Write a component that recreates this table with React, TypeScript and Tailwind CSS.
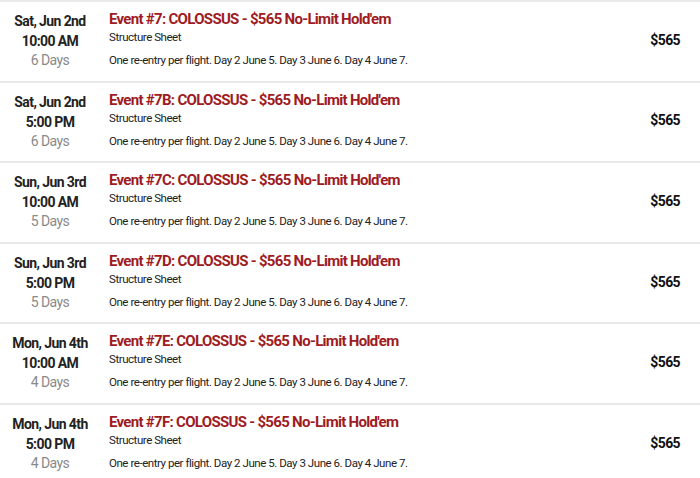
import React from "react";

interface EventRowProps {
  day: string;
  time: string;
  left: string;
  title: string;
}

const events: EventRowProps[] = [
  { day: "Sat, Jun 2nd", time: "10:00 AM", left: "6 Days", title: "Event #7: COLOSSUS - $565 No-Limit Hold'em" },
  { day: "Sat, Jun 2nd", time: "5:00 PM", left: "6 Days", title: "Event #7B: COLOSSUS - $565 No-Limit Hold'em" },
  { day: "Sun, Jun 3rd", time: "10:00 AM", left: "5 Days", title: "Event #7C: COLOSSUS - $565 No-Limit Hold'em" },
  { day: "Sun, Jun 3rd", time: "5:00 PM", left: "5 Days", title: "Event #7D: COLOSSUS - $565 No-Limit Hold'em" },
  { day: "Mon, Jun 4th", time: "10:00 AM", left: "4 Days", title: "Event #7E: COLOSSUS - $565 No-Limit Hold'em" },
  { day: "Mon, Jun 4th", time: "5:00 PM", left: "4 Days", title: "Event #7F: COLOSSUS - $565 No-Limit Hold'em" },
];

const EventRow = ({ day, time, left, title }: EventRowProps) => {
  return (
    <section className="h-[80.6px] shrink-0 border-t-2 border-[#e9e9e9] grid grid-cols-[100px_1fr_90px]">
      <div className="flex flex-col items-center pt-[9px] text-[14px] leading-[20px] tracking-[-0.6px]">
        <span className="font-bold text-[#222]">{day}</span>
        <span className="font-bold text-[#222]">{time}</span>
        <span className="text-[#8a8a8a] -mt-[1px]">{left}</span>
      </div>
      <div className="flex flex-col pl-[9px] pt-[8px]">
        <h1 className="text-[15px] leading-[18px] font-bold text-[#9e1b24] tracking-[-0.7px]">{title}</h1>
        <span className="text-[11.5px] leading-[16px] text-[#222] mt-[1px] tracking-[-0.45px]">Structure Sheet</span>
        <span className="text-[11.5px] leading-[16px] text-[#222] mt-[7px] tracking-[-0.45px]">
          One re-entry per flight. Day 2 June 5. Day 3 June 6. Day 4 June 7.
        </span>
      </div>
      <div className="flex items-center justify-end pr-[20px] pb-[2px]">
        <span className="text-[14px] font-bold text-[#111] tracking-[-0.6px]">$565</span>
      </div>
    </section>
  );
};

export default function App() {
  return (
    <div className="w-[700px] h-[478px] overflow-hidden bg-white flex flex-col font-['Roboto',sans-serif]">
      {events.map((e) => (
        <EventRow key={e.title} {...e} />
      ))}
    </div>
  );
}
